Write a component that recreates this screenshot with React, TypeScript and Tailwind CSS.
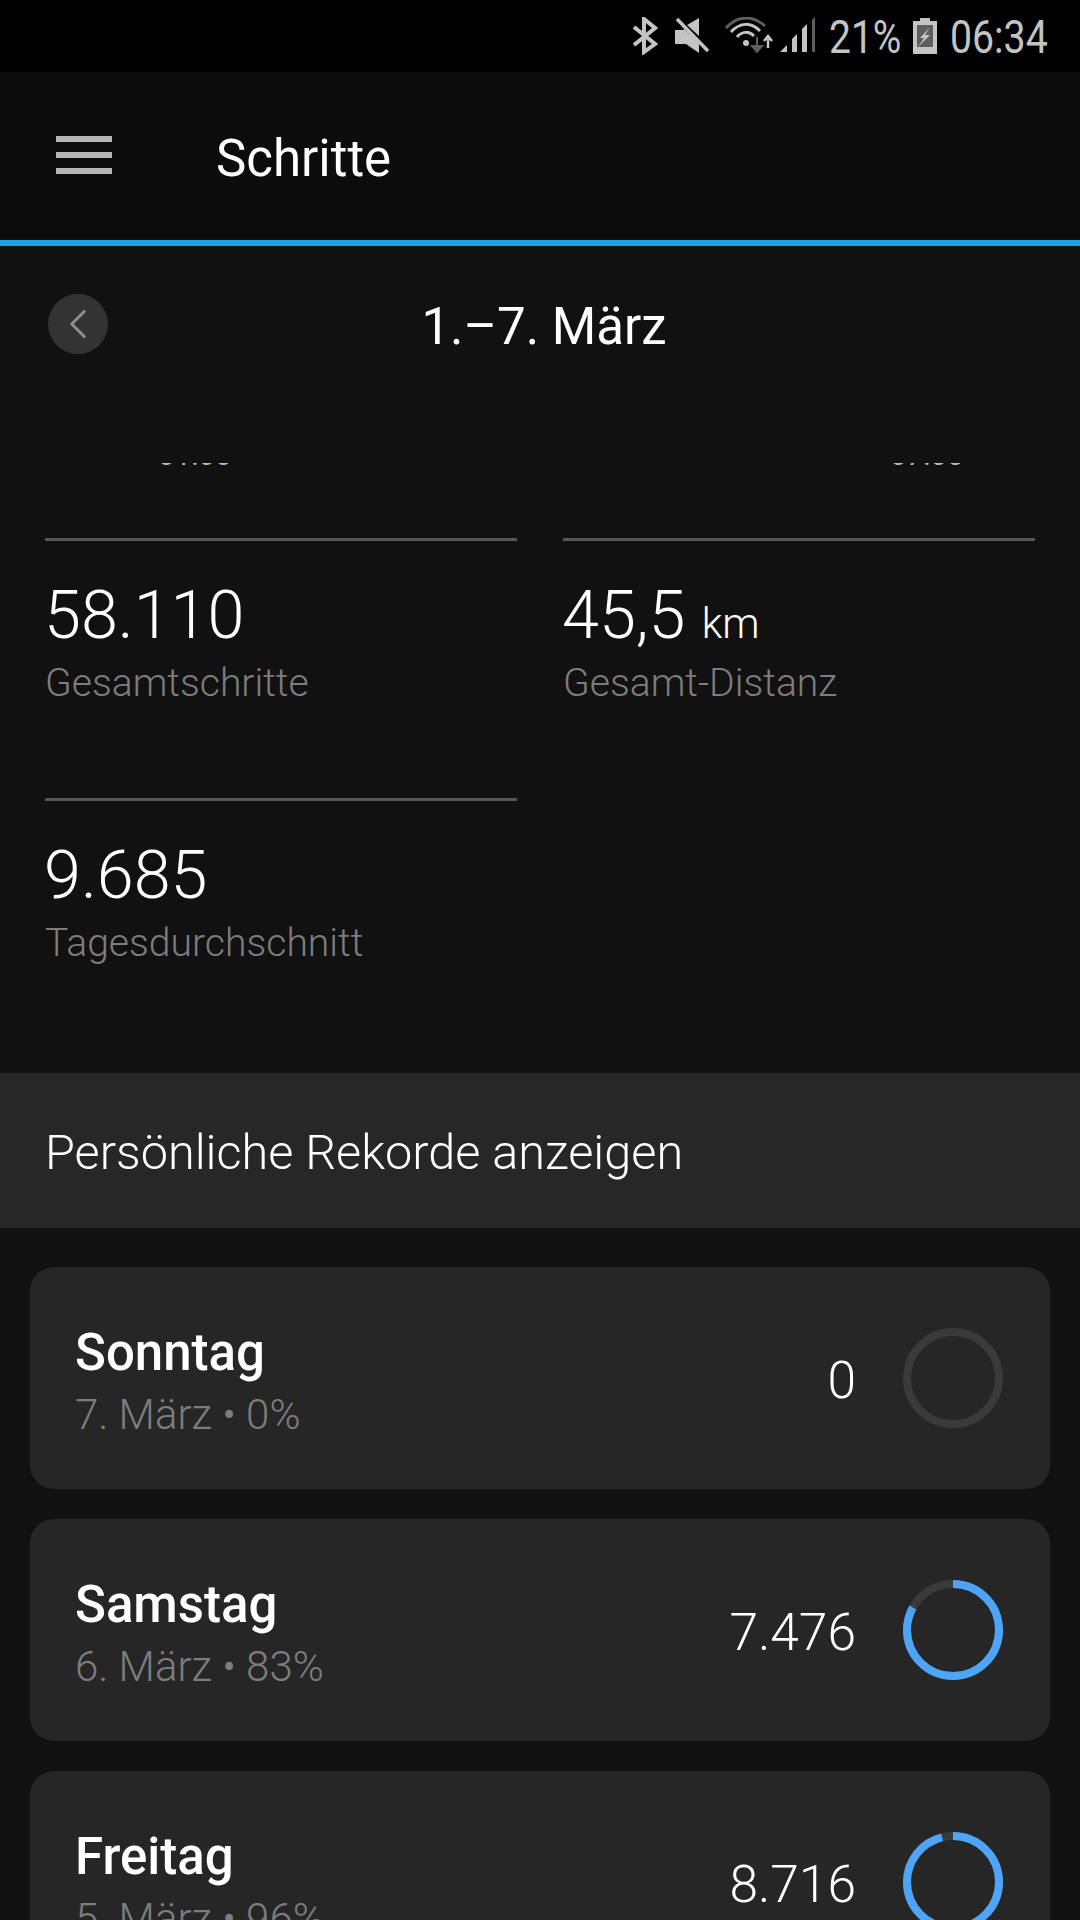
import React from 'react';
import { ChevronLeft } from 'lucide-react';

const days = [
  { name: 'Sonntag', sub: '7. März • 0%', steps: '0', pct: 0 },
  { name: 'Samstag', sub: '6. März • 83%', steps: '7.476', pct: 83 },
  { name: 'Freitag', sub: '5. März • 96%', steps: '8.716', pct: 96 },
];

function Ring({ pct }: { pct: number }) {
  const r = 46;
  const c = 2 * Math.PI * r;
  return (
    <svg width="100" height="100" viewBox="0 0 100 100" className="shrink-0">
      <circle cx="50" cy="50" r={r} fill="none" stroke="#3a3a3a" strokeWidth="8" />
      {pct > 0 && (
        <circle
          cx="50"
          cy="50"
          r={r}
          fill="none"
          stroke="#4ea5f8"
          strokeWidth="8"
          strokeDasharray={`${(c * pct) / 100} ${c}`}
          transform="rotate(-90 50 50)"
        />
      )}
    </svg>
  );
}

function StatusIcons() {
  return (
    <div className="flex items-center">
      {/* bluetooth */}
      <svg width="26" height="38" viewBox="0 0 26 38" fill="none" stroke="#c4c4c4" strokeWidth="4" className="mr-[17px]">
        <path d="M2 10 L23 27 L12 35 V2 L23 11 L2 28" />
      </svg>
      {/* mute */}
      <svg width="34" height="38" viewBox="0 0 34 38" className="mr-[16px]">
        <path d="M0 13 H8 L9 12 L24 26 V36 L11 27 H0 Z M12 8 L24 1 V19 Z" fill="#c4c4c4" />
        <path d="M2 2 L33 34" stroke="#c4c4c4" strokeWidth="3.5" />
      </svg>
      {/* wifi */}
      <svg width="48" height="38" viewBox="0 0 48 38" fill="none" className="mr-[7px]">
        <path d="M1 11 C13 -2 28 -2 40 9" stroke="#5e5e5e" strokeWidth="3" />
        <path d="M6 15 C15 5 26 5 35 14" stroke="#c4c4c4" strokeWidth="3" />
        <path d="M12 20 C17 14 24 14 29 19" stroke="#c4c4c4" strokeWidth="3" />
        <circle cx="21" cy="26" r="3" fill="#c4c4c4" />
        <path d="M32 20 V30 M27 29 H37 L32 35 Z" stroke="#5e5e5e" strokeWidth="2" fill="#5e5e5e" />
        <path d="M43 31 V20 M39 24 L43 19 L47 24" stroke="#c4c4c4" strokeWidth="2.5" />
      </svg>
      {/* signal */}
      <svg width="36" height="38" viewBox="0 0 36 38" className="mr-[13px]">
        <path d="M0 35 L7 28 V35 Z" fill="#c4c4c4" />
        <path d="M12 35 V22 L17 17 V35 Z" fill="#c4c4c4" />
        <path d="M22 35 V12 L27 7 V35 Z" fill="#c4c4c4" />
        <path d="M32 35 V3 L35 0 V35 Z" fill="#5e5e5e" />
      </svg>
    </div>
  );
}

export default function App() {
  return (
    <div className="w-[1080px] h-[1920px] overflow-hidden bg-[#111111] text-white font-['Roboto',sans-serif]">
      <div className="h-[72px] bg-black flex items-center justify-end pr-[33px]">
        <StatusIcons />
        <span className="text-[47px] leading-none text-[#c4c4c4] w-[72px] mr-[12px] origin-left scale-x-[0.83] whitespace-nowrap">21%</span>
        <svg width="24" height="36" viewBox="0 0 24 36" className="mr-[13px]">
          <path d="M7 0 H17 V3 H24 V36 H0 V3 H7 Z" fill="#c4c4c4" />
          <rect x="4" y="7" width="16" height="22" fill="#5e5e5e" />
          <path d="M17 9 L7 20 H11 L5 29 L17 17 H12 Z" fill="#c4c4c4" />
        </svg>
        <span className="text-[47px] leading-none text-[#c4c4c4] w-[97px] origin-left scale-x-[0.835] whitespace-nowrap">06:34</span>
      </div>

      <header className="h-[168px] bg-[#0c0c0c] flex items-center pl-[56px]">
        <div className="w-[56px] h-[38px] -mt-[2px] flex flex-col justify-between">
          <div className="h-[6px] bg-[#b4b4b4]" />
          <div className="h-[6px] bg-[#b4b4b4]" />
          <div className="h-[6px] bg-[#b4b4b4]" />
        </div>
        <h1 className="ml-[104px] mt-[5px] text-[51px] leading-none font-normal">Schritte</h1>
      </header>
      <div className="h-[6px] bg-[#16a5e9]" />

      <div className="relative h-[216px]">
        <div className="absolute left-[48px] top-[48px] w-[60px] h-[60px] rounded-full bg-[#333333] flex items-center justify-center">
          <ChevronLeft size={50} strokeWidth={3} color="#8f8f8f" absoluteStrokeWidth />
        </div>
        <div className="pt-[52px] text-center pl-[8px] text-[51px] leading-[58px]">1.–7. März</div>
        <div className="absolute left-[158px] top-[217px] h-[4px] w-[80px] overflow-hidden">
          <div className="-mt-[22px] text-[29.5px] leading-[28px] text-[#bbbbbb] whitespace-nowrap">01:00</div>
        </div>
        <div className="absolute left-[890px] top-[217px] h-[4px] w-[80px] overflow-hidden">
          <div className="-mt-[22px] text-[29.5px] leading-[28px] text-[#bbbbbb] whitespace-nowrap">07:00</div>
        </div>
      </div>

      <div className="pl-[45px] pr-[45px] pt-[76px] grid grid-cols-2 gap-x-[46px] h-[611px] content-start">
        <div className="border-t-[3px] border-[#555555] h-[260px] pt-[38px]">
          <div className="text-[66.5px] leading-[72px] font-light -ml-[1px]">58.110</div>
          <div className="text-[39.1px] leading-[44px] font-light text-[#7d7d7d] mt-[10px]">Gesamtschritte</div>
        </div>
        <div className="border-t-[3px] border-[#555555] h-[260px] pt-[38px]">
          <div className="text-[66.5px] leading-[72px] font-light -ml-[1px]">
            45,5 <span className="text-[42px] leading-none font-light">km</span>
          </div>
          <div className="text-[39.1px] leading-[44px] font-light text-[#7d7d7d] mt-[10px]">Gesamt-Distanz</div>
        </div>
        <div className="border-t-[3px] border-[#555555] pt-[38px]">
          <div className="text-[66.5px] leading-[72px] font-light -ml-[1px]">9.685</div>
          <div className="text-[39.1px] leading-[44px] font-light text-[#7d7d7d] mt-[10px]">Tagesdurchschnitt</div>
        </div>
      </div>

      <div className="h-[155px] bg-[#272727] flex items-center pl-[45px] pt-[5px] text-[48.6px] font-light">
        Persönliche Rekorde anzeigen
      </div>

      <div className="px-[30px] pt-[39px] flex flex-col gap-[30px]">
        {days.map((d) => (
          <div key={d.name} className="h-[222px] shrink-0 rounded-[24px] bg-[#262626] flex items-center pl-[45px] pr-[47px]">
            <div className="flex-1 mt-[7px]">
              <div className="text-[51px] leading-[56px] font-medium">{d.name}</div>
              <div className="text-[42px] leading-[46px] font-light text-[#7d7d7d] mt-[11px]">{d.sub}</div>
            </div>
            <div className="text-[51.5px] font-light mt-[5px] mr-[47px]">{d.steps}</div>
            <Ring pct={d.pct} />
          </div>
        ))}
      </div>
    </div>
  );
}
